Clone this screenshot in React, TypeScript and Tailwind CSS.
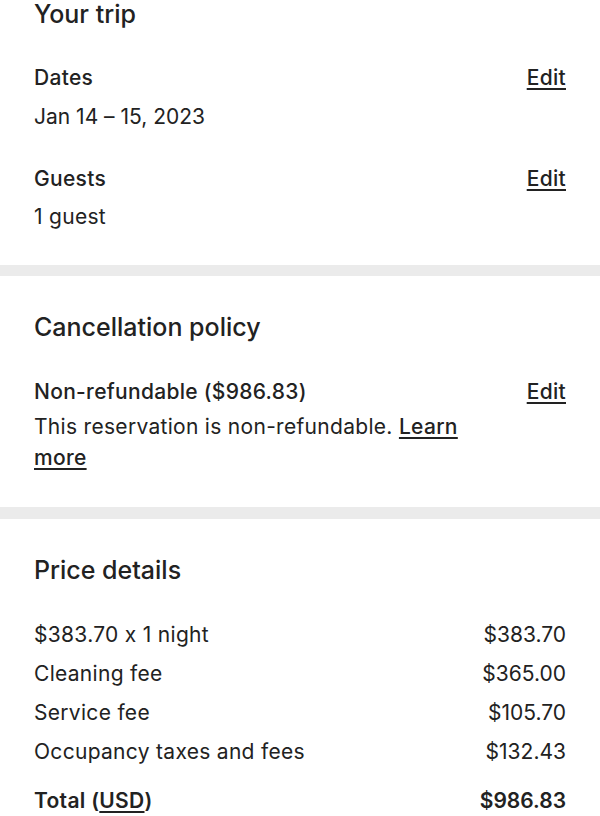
import React from "react";

function Row({ label, value, bold }: { label: React.ReactNode; value: string; bold?: boolean }) {
  return (
    <div className={`flex justify-between text-[21px] leading-[39px] ${bold ? "font-semibold" : ""}`}>
      <span>{label}</span>
      <span className="tracking-[0px]">{value}</span>
    </div>
  );
}

export default function App() {
  return (
    <div className="w-[600px] min-h-[816px] bg-white text-[#222222] font-['Inter',sans-serif] [font-feature-settings:'calt'_0] tracking-[0.3px] overflow-hidden">
      <section className="px-[34px] pb-[35px]">
        <h2 className="text-[25px] leading-[30px] font-medium tracking-[0px] mt-[-1px]">Your trip</h2>
        <div className="mt-[36px] flex justify-between items-start">
          <div>
            <div className="text-[21px] leading-[26px] font-medium">Dates</div>
            <div className="mt-[13px] text-[21px] leading-[26px] tracking-[0px]">Jan 14 – 15, 2023</div>
          </div>
          <a className="text-[21px] leading-[26px] font-medium underline underline-offset-[3px]">Edit</a>
        </div>
        <div className="mt-[36px] flex justify-between items-start">
          <div>
            <div className="text-[21px] leading-[26px] font-medium">Guests</div>
            <div className="mt-[12px] text-[21px] leading-[26px]">1 guest</div>
          </div>
          <a className="text-[21px] leading-[26px] font-medium underline underline-offset-[3px]">Edit</a>
        </div>
      </section>
      <div className="h-[11px] bg-[#ebebeb]" />
      <section className="px-[34px] pt-[36px] pb-[34px]">
        <h2 className="text-[25px] leading-[30px] font-medium tracking-[0px]">Cancellation policy</h2>
        <div className="mt-[37px] flex justify-between items-start gap-6">
          <div className="w-[440px]">
            <div className="text-[21px] leading-[26px] font-medium">Non-refundable ($986.83)</div>
            <p className="mt-[6px] text-[21px] leading-[31px]">
              This reservation is non-refundable.{" "}
              <a className="font-medium underline underline-offset-[3px]">Learn more</a>
            </p>
          </div>
          <a className="text-[21px] leading-[26px] font-medium underline underline-offset-[3px]">Edit</a>
        </div>
      </section>
      <div className="h-[12px] bg-[#ebebeb]" />
      <section className="px-[34px] pt-[36px]">
        <h2 className="text-[25px] leading-[30px] font-medium tracking-[0px]">Price details</h2>
        <div className="mt-[30px]">
          <Row label="$383.70 x 1 night" value="$383.70" />
          <Row label="Cleaning fee" value="$365.00" />
          <Row label="Service fee" value="$105.70" />
          <Row label="Occupancy taxes and fees" value="$132.43" />
        </div>
        <div className="mt-[10px]">
          <Row
            bold
            label={
              <>
                Total (<span className="underline underline-offset-[3px]">USD</span>)
              </>
            }
            value="$986.83"
          />
        </div>
      </section>
    </div>
  );
}
